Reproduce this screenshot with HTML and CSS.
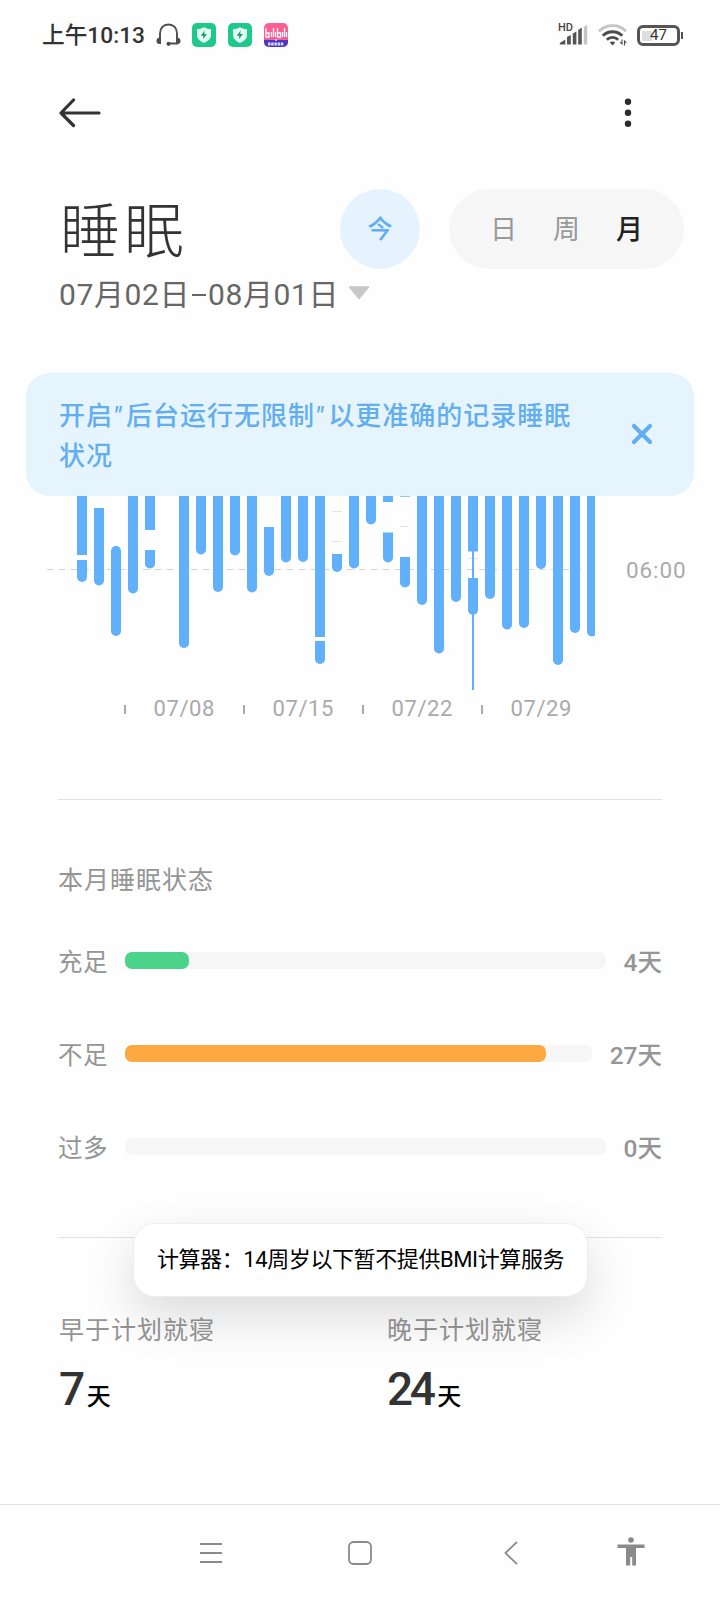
FILE: index.html
```html
<!DOCTYPE html>
<html lang="zh-CN">
  <head>
    <meta charset="UTF-8" />
    <meta name="viewport" content="width=device-width, initial-scale=1.0" />
    <title>睡眠</title>
    <link rel="stylesheet" href="styles.css">
  </head>
  <body>
    <div class="screen">
      <div class="status">
        <div class="time">上午10:13</div>
        <svg class="headset" width="26" height="24" viewBox="0 0 26 24">
          <path d="M4 17V10.500C4 5 7.500 1.500 12.500 1.500S21 5 21 10.500V20.500H13" fill="none" stroke="#4d4d4d" stroke-width="1.900" />
          <path d="M5 14v7H3.500C1.500 21 .500 19.800 .500 18S1.500 15 3 14.800zM20 14v7h1.500c2 0 3-1.200 3-3s-1-3-2.500-3.200z" fill="#4d4d4d" />
          <circle cx="12.500" cy="20.800" r="2.100" fill="#4d4d4d" />
        </svg>
        <svg class="shield" width="24" height="24" viewBox="0 0 24 24">
          <rect width="24" height="24" rx="5" fill="#1fc98b" />
          <path d="M12 4.200c2.300 1.300 4.500 1.800 7 2v6c0 3.600-3.200 6-7 7.700-3.800-1.700-7-4.100-7-7.700v-6c2.500-.2 4.700-.7 7-2z" fill="#e3fff4" />
          <path d="M12.800 7.500 8.700 12.700h2.700l-.6 3.500 4.200-5.200h-2.800z" fill="#159b70" />
        </svg>
        <svg class="shield" width="24" height="24" viewBox="0 0 24 24">
          <rect width="24" height="24" rx="5" fill="#1fc98b" />
          <path d="M12 4.200c2.300 1.300 4.500 1.800 7 2v6c0 3.600-3.200 6-7 7.700-3.800-1.700-7-4.100-7-7.700v-6c2.500-.2 4.700-.7 7-2z" fill="#e3fff4" />
          <path d="M12.800 7.500 8.700 12.700h2.700l-.6 3.500 4.200-5.200h-2.800z" fill="#159b70" />
        </svg>
        <svg class="bili" width="24" height="24" viewBox="0 0 24 24">
          <defs><clipPath id="round"><rect width="24" height="24" rx="5" /></clipPath></defs>
          <g clip-path="url(#round)">
            <rect width="24" height="24" fill="#fb5f93" />
            <rect y="17" width="24" height="7" fill="#4838c8" />
            <path d="M2 5v9h3v-4H2M7.500 9v5M9.500 5V14M11.500 9v5M13.500 5v9h3v-4h-3M18.500 9v5M20.500 5V14M22.500 9v5" fill="none" stroke="#fff" stroke-width="1.300" />
            <path d="M4 21h16" stroke="#dcd8ff" stroke-width="3" stroke-dasharray="2.500 .7" />
            <path d="M10.500 16.500h3L12 18.300z" fill="#fff" />
          </g>
        </svg>
        <div class="signal">
          <span class="hd">HD</span>
          <svg width="29" height="22" viewBox="0 0 29 22">
            <path d="M.800 20.500V19l5.500-3.500v5zM8 20.500v-7.500l3.800-2v9.500zM13.800 20.500v-11l3.600-2v13zM19.200 20.500V6l3.600-2.500v17z" fill="#555" />
            <path d="M24.800 20.500V3l3.400-2.500v20z" fill="#c4c4c4" />
          </svg>
        </div>
        <svg class="wifi" width="29" height="24" viewBox="0 0 29 24">
          <path d="M1 8.200C8.500.800 20.500.800 28 8.200" fill="none" stroke="#c4c4c4" stroke-width="2.600" />
          <path d="M4.800 12.800c5.400-5.400 14-5.400 19.400 0M8.800 16.800c3.200-3.200 8.200-3.200 11.400 0" fill="none" stroke="#4d4d4d" stroke-width="2.800" />
          <path d="M11.800 19.600c1.500-1.500 3.900-1.500 5.400 0L14.500 22.500z" fill="#4d4d4d" />
          <path d="M24 16.500V21l-1.800-1.800M26.500 22.500V18l1.800 1.800" fill="none" stroke="#4d4d4d" stroke-width="1.100" />
        </svg>
        <div class="battery"><div class="cell">47</div></div>
      </div>

      <div class="appbar">
        <svg width="42" height="30" viewBox="0 0 42 30">
          <path d="M40 15H2M14.500 2 2 15l12.500 12.500" fill="none" stroke="#333" stroke-width="3.200" stroke-linecap="round" stroke-linejoin="round" />
        </svg>
        <svg width="8" height="30" viewBox="0 0 8 30">
          <g fill="#2c2c2c">
            <circle cx="4" cy="3.700" r="3.200" />
            <circle cx="4" cy="14.700" r="3.200" />
            <circle cx="4" cy="25.700" r="3.200" />
          </g>
        </svg>
      </div>

      <div class="header">
        <h1>睡眠</h1>
        <div class="today">今</div>
        <div class="tabs">
          <span>日</span>
          <span>周</span>
          <span class="active">月</span>
        </div>
      </div>
      <div class="range">
        <span>07月02日<i class="dash"></i>08月01日</span>
        <svg width="22" height="14" viewBox="0 0 22 14"><path d="M1.500 1h19L11 12.500z" fill="#c8c8c8" stroke="#c8c8c8" stroke-width="1.500" stroke-linejoin="round" /></svg>
      </div>

      <div class="banner">
        <p>开启<i>"</i>后台运行无限制<i>"</i>以更准确的记录睡眠状况</p>
        <svg width="22" height="22" viewBox="0 0 22 22"><path d="M3 3l16 16M19 3L3 19" stroke="#62aeef" stroke-width="4.200" stroke-linecap="round" /></svg>
      </div>

      <div class="chart">
        <svg id="bars" width="595" height="200" viewBox="0 496 595 200">
          <path d="M47 569.500H595" stroke="#d4d4d4" stroke-width="1.200" stroke-dasharray="6.500 5.500" />
          <path d="M332 511.500h10M332 541.500h10M400 526.500h8M468 558.500h10" stroke="#e4e4e4" />
        </svg>
        <div class="hour">06:00</div>
      </div>
      <div class="axis">
        <div>07/08</div>
        <div>07/15</div>
        <div>07/22</div>
        <div>07/29</div>
      </div>

      <div class="section">
        <h2>本月睡眠状态</h2>
        <div class="row">
          <span class="name">充足</span>
          <div class="track"><div class="fill green" style="width: 13.400%"></div></div>
          <span class="days">4天</span>
        </div>
        <div class="row">
          <span class="name">不足</span>
          <div class="track"><div class="fill orange" style="width: 90.200%"></div></div>
          <span class="days">27天</span>
        </div>
        <div class="row">
          <span class="name">过多</span>
          <div class="track"></div>
          <span class="days">0天</span>
        </div>
      </div>

      <div class="stats">
        <div class="stat">
          <h2>早于计划就寝</h2>
          <div class="value"><b>7</b>天</div>
        </div>
        <div class="stat">
          <h2>晚于计划就寝</h2>
          <div class="value"><b>24</b>天</div>
        </div>
      </div>

      <div class="toast">计算器：14周岁以下暂不提供BMI计算服务</div>

      <div class="nav">
        <svg class="menu" width="24" height="24" viewBox="0 0 24 24"><path d="M1 3h22M1 12h22M1 21h22" stroke="#8a8a8a" stroke-width="1.800" /></svg>
        <svg class="home" width="24" height="24" viewBox="0 0 24 24"><rect x="1" y="1" width="22" height="22" rx="4.500" fill="none" stroke="#8a8a8a" stroke-width="1.800" /></svg>
        <svg class="back" width="14" height="24" viewBox="0 0 14 24"><path d="M13 .800 1.500 12 13 23.200" fill="none" stroke="#8a8a8a" stroke-width="1.800" /></svg>
        <svg class="access" width="28" height="29" viewBox="0 0 28 29">
          <circle cx="14" cy="3" r="2.800" fill="#8a8a8a" />
          <path d="M.500 7.500h27V11H19v17.500H15.200V20h-2v8.500H9V11H.500z" fill="#8a8a8a" />
        </svg>
      </div>
    </div>
    <script>
      const bars = document.querySelector("#bars");
      const top0 = 480; // bars go on under the banner
      // one entry per day: [from, to] pieces, the last piece has the round end
      const days = [
        [[top0, 555], [560, 582]], [[508, 585.5]], [[546, 636]], [[top0, 593.5]],
        [[top0, 530], [550, 568.5]], [], [[top0, 648]], [[top0, 554.5]],
        [[top0, 592]], [[top0, 555.5]], [[top0, 592.5]], [[527, 576]],
        [[top0, 562.5]], [[top0, 562]], [[top0, 637], [641, 664]], [[554, 572]],
        [[top0, 568.5]], [[top0, 524.5]], [[top0, 502], [532.5, 562.5]],
        [[top0, 496.7], [557, 587.5]], [[top0, 605]], [[top0, 653.5]], [[top0, 602]],
        [[top0, 551.5], [578, 615]], [[top0, 599]], [[top0, 629.5]], [[top0, 628]],
        [[top0, 569]], [[top0, 665]], [[top0, 633]], [[top0, 636.5]],
      ];

      days.forEach((parts, i) => {
        const x = 77 + i * 17;
        parts.forEach(([from, to], n) => {
          let d = `M${x} ${from}V${to}h10V${from}z`;
          if (n === parts.length - 1) {
            d = `M${x} ${from}V${to - 5}a5 5 0 0 0 10 0V${from}z`;
            if (i === 2) d = `M${x} ${from + 5}V${to - 5}a5 5 0 0 0 10 0V${from + 5}a5 5 0 0 0 -10 0z`;
          }
          addPath(d);
        });
      });
      // selected day
      addPath("M472 490h2v200h-2z");

      function addPath(d) {
        const path = document.createElementNS("http://www.w3.org/2000/svg", "path");
        path.setAttribute("d", d);
        path.setAttribute("fill", "#60b0fc");
        bars.appendChild(path);
      }
    </script>
  </body>
</html>
```
FILE: styles.css
```css
* {
  box-sizing: border-box;
}
body {
  margin: 0;
  background: #fefefe;
  font-family: Roboto, "Noto Sans CJK SC", sans-serif;
  color: #333;
}
h1, h2, p {
  margin: 0;
  font-weight: 400;
}
svg {
  display: block;
  flex: none;
}
.screen {
  position: relative;
  width: 720px;
  height: 1600px;
  overflow: hidden;
  display: flex;
  flex-direction: column;
}
.status {
  height: 70px;
  padding: 0 37px 0 42px;
  display: flex;
  align-items: center;
}
.time {
  width: 114px;
  padding-top: 1px;
  font-size: 22.7px;
  font-weight: 500;
  line-height: 30px;
  white-space: nowrap;
}
.headset {
  margin-right: 10px;
}
.shield {
  margin-right: 12px;
}
.signal {
  position: relative;
  margin-left: auto;
  margin-right: 10px;
}
.hd {
  position: absolute;
  left: -1px;
  top: -2px;
  font-size: 11px;
  font-weight: 500;
  line-height: 12px;
  color: #444;
}
.wifi {
  margin-right: 10px;
}
.battery {
  display: flex;
  align-items: center;
}
.battery::after {
  content: "";
  width: 2px;
  height: 7px;
  margin-left: 1px;
  background: #555;
}
.cell {
  width: 43px;
  height: 21px;
  border: 3px solid #555;
  border-radius: 6px;
  background: linear-gradient(#dedede, #dedede) 2px 3px / 10px 10px no-repeat;
  font-size: 15px;
  line-height: 15px;
  text-align: center;
}
.appbar {
  height: 86px;
  padding: 0 88px 0 59px;
  display: flex;
  align-items: center;
  justify-content: space-between;
}
.header {
  height: 80px;
  margin-top: 33px;
  padding: 0 36px 0 60px;
  display: flex;
  align-items: center;
}
h1 {
  width: 280px;
  padding-top: 8px;
  font-size: 60px;
  font-weight: 300;
  line-height: 80px;
  letter-spacing: 4px;
}
.today {
  width: 80px;
  height: 80px;
  border-radius: 50%;
  background: #e6f3ff;
  color: #62aeef;
  font-size: 25px;
  font-weight: 500;
  line-height: 82px;
  text-align: center;
}
.tabs {
  width: 235px;
  height: 80px;
  margin-left: 29px;
  padding-left: 23px;
  border-radius: 40px;
  background: #f6f6f6;
  display: flex;
  font-size: 27px;
  line-height: 83px;
  text-align: center;
  color: #999;
}
.tabs span {
  width: 63px;
}
.tabs .active {
  color: #222;
  font-weight: 500;
}
.range {
  height: 50px;
  padding-left: 59px;
  display: flex;
  align-items: center;
  gap: 9px;
  font-size: 30px;
  letter-spacing: .6px;
  color: #666;
}
.range span {
  margin-top: -4px;
}
.range svg {
  margin-top: -3px;
}
.dash {
  display: inline-block;
  width: 14px;
  height: 2px;
  margin: 0 2px;
  vertical-align: 9px;
  background: #666;
}
.banner {
  position: relative;
  height: 123px;
  margin: 54px 26px 0;
  padding: 3px 41px 0 33px;
  border-radius: 24px;
  background: #e6f4fe;
  color: #62aeef;
  display: flex;
  align-items: center;
  justify-content: space-between;
}
.banner p {
  width: 525px;
  font-size: 26px;
  font-weight: 500;
  line-height: 40px;
  letter-spacing: 1px;
}
.banner i {
  letter-spacing: 5px;
}
.banner svg {
  margin-top: -4px;
}
.chart {
  height: 200px;
  display: flex;
}
.hour {
  margin: 58px 0 0 31px;
  font-size: 22.5px;
  line-height: 32px;
  letter-spacing: .9px;
  color: #aaa;
}
.axis {
  height: 26px;
  padding-left: 123.5px;
  display: flex;
  align-items: center;
}
.axis div {
  width: 119px;
  display: flex;
  align-items: center;
  color: #aaa;
  font-size: 22px;
  line-height: 28px;
  letter-spacing: .6px;
}
.axis div::before {
  content: "";
  width: 2px;
  height: 9px;
  margin-right: 28px;
  background: #aaa;
}
.section {
  height: 439px;
  margin: 77px 58px 0;
  padding-top: 61px;
  border-top: 1px solid #e2e2e2;
  border-bottom: 1px solid #e2e2e2;
}
h2 {
  font-size: 25px;
  line-height: 40px;
  letter-spacing: 1px;
  color: #959595;
}
.section h2 {
  margin-bottom: 13px;
}
.row {
  height: 93px;
  display: flex;
  align-items: center;
  font-size: 24.5px;
  color: #959595;
}
.row .name {
  width: 67px;
  letter-spacing: .5px;
}
.track {
  flex: 1;
  height: 17px;
  border-radius: 7px;
  background: #f6f6f6;
}
.fill {
  height: 17px;
  border-radius: 7px;
}
.green {
  background: #4cd38a;
}
.orange {
  background: #fda840;
}
.days {
  margin-left: 18px;
  font-weight: 500;
}
.stats {
  margin-top: 73px;
  padding-left: 59px;
  display: grid;
  grid-template-columns: 328px 1fr;
}
.value {
  display: flex;
  align-items: baseline;
  gap: 5px;
  height: 70px;
  color: #000;
  font-size: 24px;
  font-weight: 500;
  line-height: 76px;
}
.value b {
  font-size: 46px;
  font-weight: 500;
  letter-spacing: -3.5px;
  color: #333;
}
.toast {
  position: absolute;
  left: 133px;
  top: 1223px;
  width: 455px;
  height: 74px;
  border: 1px solid #eee;
  border-radius: 22px;
  background: #fff;
  box-shadow: 0 20px 50px rgba(0, 0, 0, .14);
  color: #000;
  font-size: 22px;
  line-height: 72px;
  letter-spacing: -.4px;
  text-align: center;
  white-space: nowrap;
}
.nav {
  height: 96px;
  margin-top: auto;
  padding-left: 199px;
  border-top: 1px solid #e2e2e2;
  display: flex;
  align-items: center;
}
.home {
  margin-left: 125px;
}
.back {
  margin-left: 132px;
}
.access {
  margin: -3px 0 0 99px;
}
```
